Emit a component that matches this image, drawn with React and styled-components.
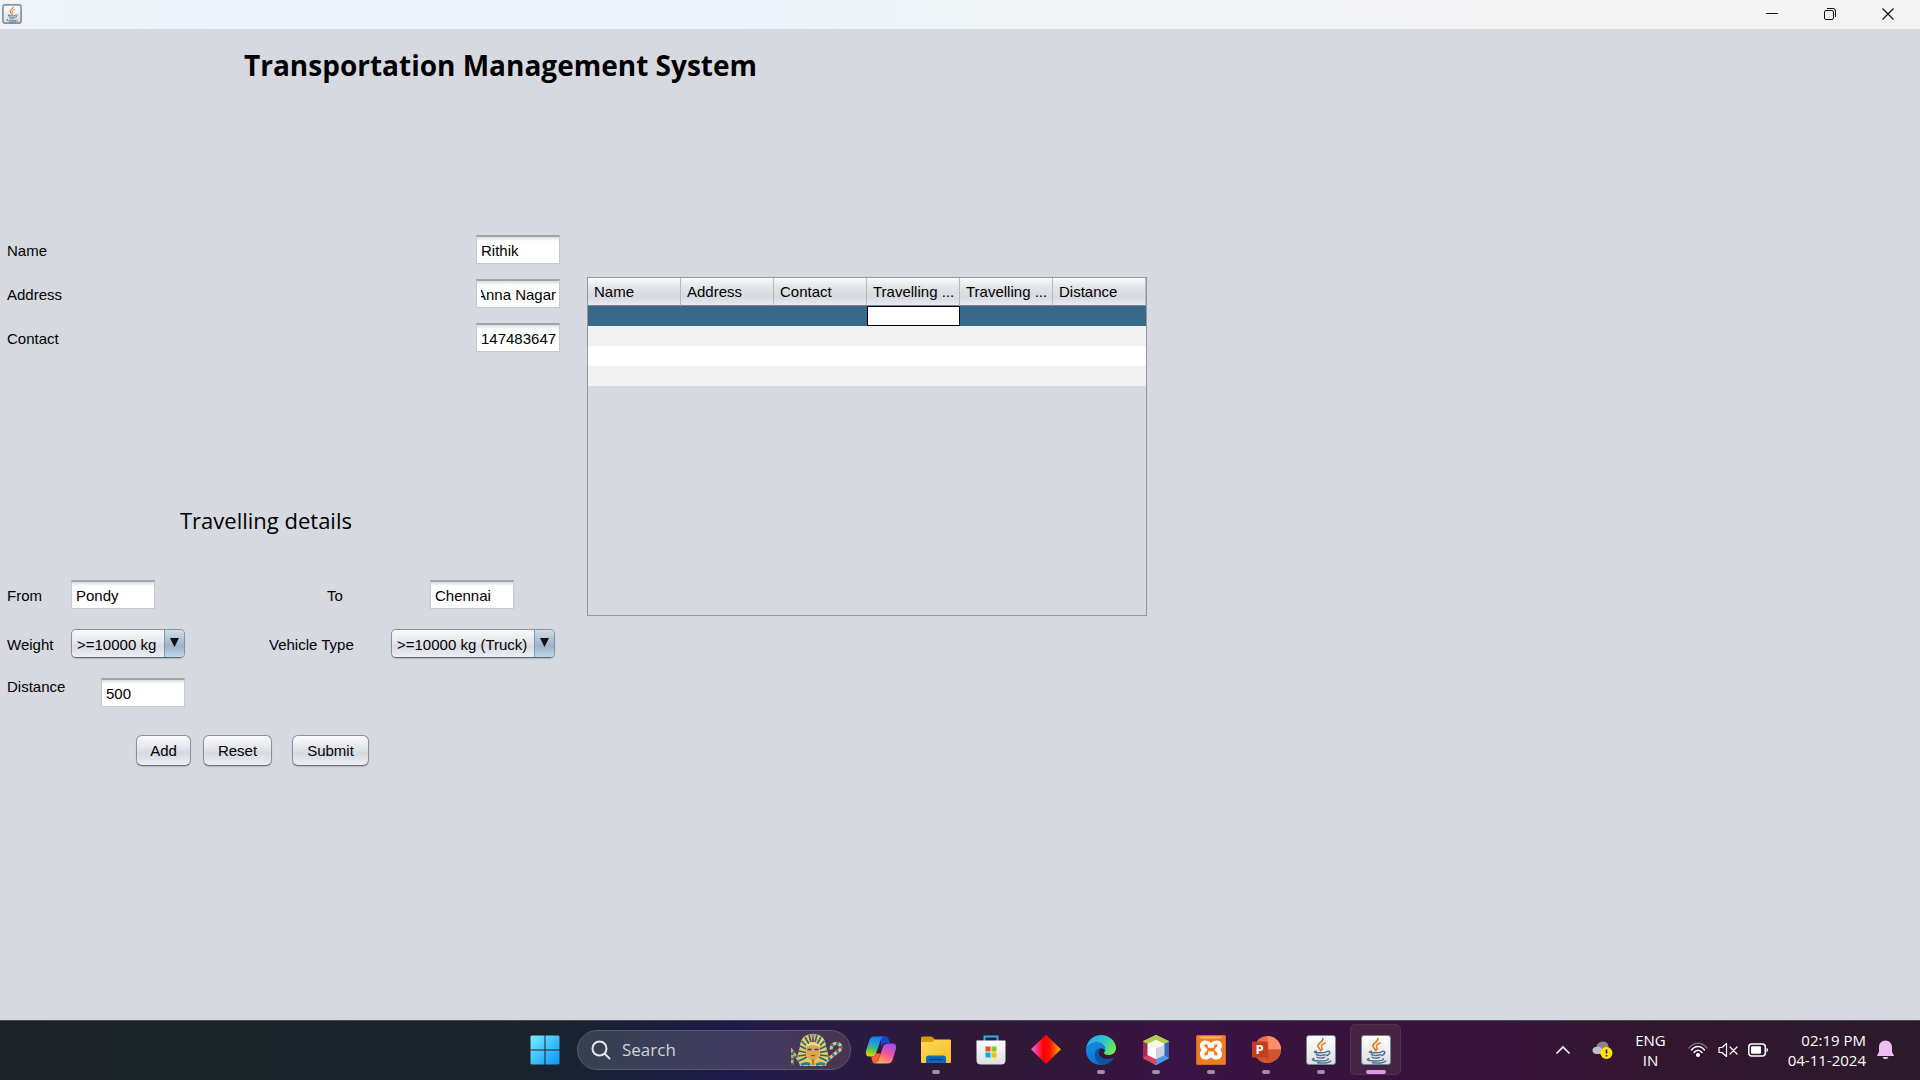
import React, { useEffect, useRef } from "react";
import styled, { createGlobalStyle } from "styled-components";

const GlobalStyle = createGlobalStyle`
  *, *::before, *::after { box-sizing: border-box; }
  body { margin: 0; background: #d6d9e0; color: #000; font: 15px/18px "Liberation Sans", Arial, sans-serif; }
  button, input, select { font: inherit; color: inherit; margin: 0; }
`;

const uiFont = `"Open Sans", "Noto Sans", sans-serif`;

const Shell = styled.div`
  display: flex;
  flex-direction: column;
  min-height: 100vh;
`;

/* Window title bar */

const TitleBar = styled.header`
  display: flex;
  align-items: flex-start;
  justify-content: space-between;
  height: 29px;
  padding: 0 3px 0 2px;
  background: linear-gradient(90deg, #eef4f8 0, #edf2fb 12%, #edf2fb 38%, #eff4f7 50%, #f3f3f5 75%, #f3f3f3 100%);
`;

const WindowIcon = styled.svg`
  width: 20px;
  height: 20px;
  margin-top: 4px;
`;

const WindowButtons = styled.div`
  display: flex;
`;

const WindowButton = styled.button`
  display: grid;
  place-items: center;
  width: 58px;
  height: 28px;
  padding: 0;
  border: 0;
  background: none;
`;

/* Form */

const Content = styled.main`
  flex: 1;
  padding: 16px 7px 24px;
`;

const Title = styled.h1`
  margin: 0 0 150px 237px;
  font: 700 28px/40px ${uiFont};
`;

const Body = styled.div`
  display: flex;
  align-items: flex-start;
  gap: 27px;
`;

const Form = styled.form`
  flex: 0 0 553px;
`;

const CustomerFields = styled.div`
  display: flex;
  flex-direction: column;
  gap: 15px;
`;

const CustomerRow = styled.div`
  display: flex;
  align-items: center;
  justify-content: space-between;
  & > label { padding-top: 2px; }
`;

const TextBox = styled.input`
  width: 84px;
  height: 29px;
  padding: 0 3px 0 4px;
  border: 1px solid #c6c8cc;
  border-top: 2px solid #a2a4a8;
  border-radius: 0;
  outline: 0;
  background: linear-gradient(#dcdcde 0, #fff 4px);
`;

const SectionTitle = styled.h2`
  margin: 153px 0 45px 173px;
  font: 400 22px/30px ${uiFont};
`;

const TripFields = styled.div`
  display: flex;
  flex-direction: column;
  gap: 20px;
`;

const TripRow = styled.div`
  display: flex;
  gap: ${(p) => p.$gap}px;
`;

const Field = styled.div`
  display: flex;
  align-items: ${(p) => (p.$top ? "flex-start" : "center")};
  & > label { padding-top: ${(p) => (p.$top ? 0 : 2)}px; }
`;

const FieldLabel = styled.label`
  width: ${(p) => p.$width}px;
`;

const Combo = styled.div`
  display: grid;
  grid-template-columns: 1fr 20px;
  width: ${(p) => p.$width}px;
  height: 29px;
  border: 1px solid #8b9099;
  border-bottom-color: #5d6977;
  border-radius: 5px;
  overflow: hidden;
  background: linear-gradient(#fafafb, #e4e6ea 45%, #d8dbe2 60%, #eceff5);
  box-shadow: 0 1px 1px #b4b8c0;
`;

const ComboSelect = styled.select`
  grid-area: 1 / 1 / 2 / 3;
  appearance: none;
  width: 100%;
  padding: 3px 20px 0 5px;
  border: 0;
  outline: 0;
  background: none;
`;

const ComboArrow = styled.span`
  grid-area: 1 / 2 / 2 / 3;
  display: grid;
  place-items: center;
  padding-bottom: 2px;
  border-left: 1px solid #7f99b0;
  background: linear-gradient(#d0dce8, #a7bdd0 45%, #9cb4c9 60%, #c3d7e9);
  pointer-events: none;
`;

const Buttons = styled.div`
  display: flex;
  gap: 12px;
  margin: 28px 0 0 129px;
`;

const PushButton = styled.button`
  width: ${(p) => p.$width}px;
  height: 31px;
  padding: 0;
  border: 1px solid #8b9099;
  border-bottom-color: #6b7079;
  border-radius: 6px;
  background: linear-gradient(#fafafb, #e4e6ea 40%, #d6d9e0 60%, #eceff5);
  box-shadow: 0 1px 1px #b4b8c0;
  &:last-child { margin-left: 8px; }
`;

/* Table */

const TablePane = styled.div`
  flex: 0 1 560px;
  height: 339px;
  margin-top: 42px;
  border: 1px solid #9297a1;
`;

const Table = styled.table`
  width: 100%;
  table-layout: fixed;
  border-collapse: separate;
  border-spacing: 0;
`;

const HeadCell = styled.th`
  height: 28px;
  padding: 0 6px;
  border-right: 1px solid #b4b8c0;
  border-bottom: 1px solid #80858f;
  background: linear-gradient(#fafafb, #e2e4e8 35%, #d7dae0 70%, #e6eaf2);
  font-weight: 400;
  text-align: left;
  white-space: nowrap;
`;

const BodyRow = styled.tr`
  background: ${(p) => (p.$selected ? "#39698a" : "#fff")};
  &:nth-child(even) { background: #f2f2f2; }
`;

const Cell = styled.td`
  height: 20px;
  padding: 0;
  ${(p) => p.$editing && "background: #fff; border: 1px solid #000;"}
`;

/* Taskbar */

const Taskbar = styled.footer`
  display: grid;
  grid-template-columns: 1fr auto 1fr;
  align-items: center;
  height: 60px;
  padding-bottom: 2px;
  border-top: 1px solid #4b4a52;
  background: linear-gradient(90deg, #1b2327 0, #19242b 27%, #1b1f3c 34%, #1e1b49 38%, #2a1b42 44%, #2f1a37 50%, #34163b 57%, #3a1445 61%, #38133d 68%, #38143a 78%, #32162f 86%, #2c1a2b 100%);
  color: #fff;
  font-family: ${uiFont};
`;

const Apps = styled.nav`
  grid-column: 2;
  display: flex;
  align-items: center;
`;

const AppButton = styled.button`
  display: grid;
  grid-template-rows: 1fr 4px;
  justify-items: center;
  align-items: center;
  row-gap: 0;
  width: 51px;
  height: 51px;
  margin: 0 2px;
  padding: 0;
  border: 1px solid ${(p) => (p.$active ? "#523449" : "transparent")};
  border-radius: 5px;
  background: ${(p) => (p.$active ? "#482444" : "none")};
`;

const AppIcon = styled.svg`
  display: block;
  width: 32px;
  height: 32px;
  margin-top: 4px;
`;

const RunMark = styled.span`
  width: ${(p) => (p.$active ? 20 : 8)}px;
  height: 4px;
  border-radius: 2px;
  background: ${(p) => (p.$active ? "#d99be6" : "#a08fa6")};
  visibility: ${(p) => (p.$running ? "visible" : "hidden")};
`;

const SearchBox = styled.label`
  display: flex;
  align-items: center;
  width: 274px;
  height: 40px;
  margin: 0 2px 0 5px;
  padding: 0 7px 0 13px;
  border: 1px solid #5d5873;
  border-radius: 20px;
  background: linear-gradient(90deg, #36414f, #3f3d5e 45%, #443a61 70%, #48344f);
`;

const SearchInput = styled.input`
  flex: 1;
  min-width: 0;
  padding: 0 0 0 11px;
  border: 0;
  outline: 0;
  background: none;
  font: 17px/24px ${uiFont};
  &::placeholder { color: #d2d3dc; opacity: 1; }
`;

const Tray = styled.div`
  grid-column: 3;
  display: flex;
  align-items: center;
  justify-content: flex-end;
  padding-right: 26px;
  font-size: 15px;
  line-height: 20px;
`;

const TrayButton = styled.button`
  display: flex;
  align-items: center;
  gap: ${(p) => p.$gap || 0}px;
  margin-right: ${(p) => p.$after || 0}px;
  padding: 0;
  border: 0;
  background: none;
`;

const TrayText = styled.div`
  margin-right: ${(p) => p.$after}px;
  text-align: ${(p) => p.$align};
`;

function JavaIcon({ small }) {
  const id = small ? "javaSmall" : "javaBig";
  return (
    <>
      <defs>
        <linearGradient id={id} x1="0" y1="0" x2="0" y2="1">
          <stop offset="0" stopColor="#fff" />
          <stop offset="1" stopColor="#dedede" />
        </linearGradient>
      </defs>
      <rect x="1.5" y="1.5" width="29" height="29" rx="2.5" fill={`url(#${id})`} stroke={small ? "#58718c" : "#6f8796"} strokeWidth={small ? 2 : 1} />
      <g fill="none" strokeLinecap="round">
        <path d="M17.8 4.500c1.200 3-5.500 4.600-4.800 7.600.3 1.700 2.400 2.700 2.600 4.600" stroke="#e8761f" strokeWidth="1.700" />
        <path d="M20.300 8.800c-3 1.300-4.500 2.300-3.600 4 .9 1.300.7 2.300-.3 3.500" stroke="#e8761f" strokeWidth="1.400" />
        <path d="M11.500 17.200c-3.800.8-2 1.700 3.500 1.600 3 0 5-.3 6-.7M11.300 20.400c1.800 1.500 6.800 1.300 9 .2M12 23.200c1.600 1.300 5.500 1.200 7.500.2M22 17.500c4-1.200 3.600 2.800-.5 4M9 24.500c-4 1.300 0 2.600 6.500 2.500 5 0 9-1 7.500-2.300M12.500 28.800c5 .6 11 .2 13.300-1.800" stroke="#4e7390" strokeWidth="1.400" />
      </g>
    </>
  );
}

const icons = {
  start: (
    <>
      <defs>
        <linearGradient id="win" x1="0" y1="0" x2="1" y2="1">
          <stop offset="0" stopColor="#7aeeff" />
          <stop offset=".5" stopColor="#3fc1fb" />
          <stop offset="1" stopColor="#0a93f8" />
        </linearGradient>
      </defs>
      <path fill="url(#win)" d="M2.500 1.500H15.500V15.500H1.500V2.500ZM16.500 1.500H29.500L30.500 2.500V15.500H16.500ZM1.500 16.500H15.500V30.500H2.500L1.500 29.500ZM16.500 16.500H30.500V29.500L29.500 30.500H16.500Z" />
    </>
  ),
  copilot: (
    <>
      <defs>
        <linearGradient id="cpA" x1=".4" y1="0" x2=".2" y2="1">
          <stop offset="0" stopColor="#1483e8" />
          <stop offset=".35" stopColor="#1fa3d8" />
          <stop offset=".65" stopColor="#5cc256" />
          <stop offset="1" stopColor="#fbd100" />
        </linearGradient>
        <linearGradient id="cpB" x1=".7" y1="0" x2=".3" y2="1">
          <stop offset="0" stopColor="#a24bf0" />
          <stop offset=".5" stopColor="#f0569c" />
          <stop offset="1" stopColor="#ffad55" />
        </linearGradient>
      </defs>
      <path d="M16 2.500h4c3 0 3.500 2 4.200 4.500l.8 2h-4c-3 0-4 2-5 4.500z" fill="#1745cf" />
      <path d="M9 2.500h10c-3 1-3.500 4-4.500 7l-3.500 10c-.8 2.300-2 3-4 3H4c-3 0-3.500-3-2.800-6L4.500 6C5.300 3.800 6.500 2.500 9 2.500z" fill="url(#cpA)" />
      <path d="M15.500 19.500l-2 6c-.8 3-2 4-4 4-2.500-.3-2.200-4-3.500-7h1c2 0 3.300-1 4-3z" fill="#f4622f" />
      <path d="M24.500 9.500h3.500c3 0 3.500 3 2.800 6L27.500 26c-.8 2.500-2.500 3.500-4.500 3.500H10c2.500-.5 3.500-3 4.300-6l3.700-10.500c.8-2.500 2.500-3.500 6.500-3.500z" fill="url(#cpB)" />
    </>
  ),
  files: (
    <>
      <defs>
        <linearGradient id="fold" x1="0" y1="0" x2="1" y2="1">
          <stop offset="0" stopColor="#ffd95c" />
          <stop offset="1" stopColor="#f9bd22" />
        </linearGradient>
      </defs>
      <path d="M1 4q0-1.500 1.500-1.500H11q1 0 2 1l2 2V12H1z" fill="#dd9a08" />
      <path d="M1 8h11l3-2.500h15q1 0 1 1V28q0 1-1 1H2q-1 0-1-1z" fill="url(#fold)" />
      <path d="M6 29v-5q0-2.500 2.500-2.500h15Q26 21.500 26 24v5z" fill="#0b6cbd" />
      <path d="M9.500 25.500h13" stroke="#073f78" strokeWidth="1.500" />
    </>
  ),
  store: (
    <>
      <defs>
        <linearGradient id="bag" x1="0" y1="0" x2="0" y2="1">
          <stop offset="0" stopColor="#fff" />
          <stop offset="1" stopColor="#dedede" />
        </linearGradient>
      </defs>
      <path d="M9.500 8V2.500h13V8" fill="none" stroke="#27b4ee" strokeWidth="2" />
      <path d="M1.500 6.500h29V26q0 4.500-4.500 4.500H6q-4.500 0-4.500-4.500z" fill="url(#bag)" />
      <path d="M10.500 12.500h5v5h-5z" fill="#f1511b" />
      <path d="M16.500 12.500h5v5h-5z" fill="#80cc28" />
      <path d="M10.500 18.500h5v5h-5z" fill="#00adef" />
      <path d="M16.500 18.500h5v5h-5z" fill="#fbbc09" />
    </>
  ),
  diamond: (
    <>
      <defs>
        <linearGradient id="dia" x1="0" y1="0" x2="1" y2="0">
          <stop offset=".03" stopColor="#ff5fe0" />
          <stop offset=".42" stopColor="#ff0000" />
          <stop offset=".62" stopColor="#ff1000" />
          <stop offset="1" stopColor="#ffb400" />
        </linearGradient>
      </defs>
      <path d="M16 .8 31 15.300 16 30 1 15.300z" fill="url(#dia)" />
    </>
  ),
  edge: (
    <>
      <defs>
        <linearGradient id="edA" x1="0" y1=".2" x2="1" y2=".6">
          <stop offset="0" stopColor="#2aa8ee" />
          <stop offset=".55" stopColor="#2cc5cf" />
          <stop offset="1" stopColor="#74ea4c" />
        </linearGradient>
        <linearGradient id="edB" x1="0" y1="0" x2=".6" y2="1">
          <stop offset="0" stopColor="#128fe2" />
          <stop offset="1" stopColor="#0870cf" />
        </linearGradient>
      </defs>
      <path d="M1 15C2 6.500 8.500 1 16 1c8.500 0 15 6.500 15 13 0 4.500-3.500 7-7.500 7-2.500 0-4.500-.8-4.500-2 0-.9 1.200-1.500 1.200-3.500C20.200 12 16.500 8.500 12 8.500c-5 0-9 2.500-11 6.500z" fill="url(#edA)" />
      <path d="M1 15c2-4 6.500-6.500 11-6.500 4.500 0 8.200 3.500 8.200 7 0 .5 0 1-.2 1.500-.5-2-2.200-3-4-2.700-2.500.5-4 3-3.300 6C13.800 24.500 18 27 23 26.500c2-.2 3.500-.8 5-1.500-2.700 3.700-7 6-12 6C7.500 31 1 24.500 1 16.500z" fill="url(#edB)" />
      <path d="M16 14.300c-4 0-6.500 3.200-6.200 7.200.4 4.500 3.700 8.300 7.200 9.500 5-.3 9-3 11.500-6.300.4-.6-.1-.9-.7-.6-1.500.7-3 1-4.800 1-5 0-9-3-9.200-6.300-.1-2 .8-3.500 2.200-4.500z" fill="#10509c" />
    </>
  ),
  netbeans: (
    <>
      <path d="M16 1 29 7.500v16L16 31 3 23.500v-16z" fill="#f4f5f5" />
      <path d="M16 1 29 7l-4 3-9-4-9 4-4-3z" fill="#b1cf4b" />
      <path d="M3 7.500 8 10v11.500l-5 3z" fill="#a42a56" />
      <path d="M3 24.500 8 21l8 4v6z" fill="#db4262" />
      <path d="M29 7.500 24 10v11.500l5 3z" fill="#2d66b4" />
      <path d="M29 24.500 24 21l-8 4v6z" fill="#489ae8" />
      <path d="m16 6 8.500 4.300L16 15 7.500 10.300z" fill="#f4f7e6" />
      <path d="M7.500 10.300 16 15v10l-8.500-4z" fill="#fff" />
      <path d="M24.500 10.300 16 15v10l8.500-4z" fill="#ccd3dc" />
    </>
  ),
  xampp: (
    <>
      <rect x="1" y="1" width="30" height="30" rx="2" fill="#f47b20" />
      <rect x="1.500" y="1.500" width="29" height="29" rx="2" fill="none" stroke="#c86c2c" />
      <path d="M4 2.500h24q-1 2-4 2H8q-3 0-4-2z" fill="#fff" opacity=".45" />
      <path d="M10.500 6.500C7 6.500 5 8.800 5 11.500c0 1.800.7 3.300 1.700 4.300C5.600 17 5 18.300 5 20c0 3.300 2.300 5.500 5.500 5.500 2.300 0 4.300-.8 5.500-2.300 1.200 1.500 3.200 2.300 5.500 2.300 3.200 0 5.500-2.200 5.500-5.500 0-1.700-.6-3-1.700-4.200 1-1 1.700-2.500 1.700-4.300 0-2.700-2-5-5.500-5-2.300 0-4.300.9-5.500 2.600-1.200-1.700-3.200-2.600-5.500-2.600z" fill="#fff" />
      <path d="M9.300 11.300c0-1.600 3.700-1.400 3.700 1v1.500h6v-1.500c0-2.400 3.700-2.600 3.700-1s-2.500 2.500-3.200 4.500c.7 2 3.200 2.500 3.200 4.500s-3.700 1.700-3.700-.7v-2h-6v2c0 2.400-3.700 2.700-3.700.7s2.500-2.500 3.200-4.500c-.7-2-3.200-2.900-3.200-4.500z" fill="#f47b20" />
    </>
  ),
  powerpoint: (
    <>
      <circle cx="17.500" cy="15.500" r="13.500" fill="#ec6c49" />
      <path d="M17.500 2A13.500 13.500 0 0 1 31 15.500H17.500z" fill="#ff8f6b" />
      <path d="M4 15.500h27a13.500 13.500 0 0 1-27 0z" fill="#d35230" />
      <path d="M17.500 7.500v18" stroke="#a13a22" strokeWidth="2" opacity=".4" />
      <rect x="2" y="7.500" width="15.500" height="16" rx="1.300" fill="#c43e1c" />
      <text x="5.500" y="20" fill="#fff" fontFamily="Open Sans, sans-serif" fontWeight="700" fontSize="13">P</text>
    </>
  ),
  java: <JavaIcon />,
};

const apps = [
  { id: "copilot", name: "Copilot" },
  { id: "files", name: "File Explorer", running: true },
  { id: "store", name: "Microsoft Store" },
  { id: "diamond", name: "Diamond" },
  { id: "edge", name: "Microsoft Edge", running: true },
  { id: "netbeans", name: "NetBeans", running: true },
  { id: "xampp", name: "XAMPP", running: true },
  { id: "powerpoint", name: "PowerPoint", running: true },
  { id: "java", name: "Java", running: true },
  { id: "java", name: "Java window", running: true, active: true },
];

const columns = ["Name", "Address", "Contact", "Travelling ...", "Travelling ...", "Distance"];
const rows = [0, 1, 2, 3];

function TaskApp({ id, name, running, active }) {
  return (
    <AppButton type="button" aria-label={name} $active={active}>
      <AppIcon viewBox="0 0 32 32">{icons[id]}</AppIcon>
      <RunMark $running={running} $active={active} />
    </AppButton>
  );
}

function ScrolledTextBox(props) {
  const ref = useRef(null);
  useEffect(() => {
    ref.current.scrollLeft = ref.current.scrollWidth;
  }, []);
  return <TextBox ref={ref} {...props} />;
}

function ComboBox({ id, value, width }) {
  return (
    <Combo $width={width}>
      <ComboSelect id={id} defaultValue={value}>
        <option>{value}</option>
      </ComboSelect>
      <ComboArrow>
        <svg width="9" height="9" viewBox="0 0 9 9"><path d="M0 0h9L4.500 9z" fill="#111" /></svg>
      </ComboArrow>
    </Combo>
  );
}

function Pharaoh() {
  return (
    <svg width="52" height="34" viewBox="0 0 52 34" aria-hidden="true">
      <path d="M1 32V18l10 13" fill="none" stroke="#d9a648" strokeWidth="3" />
      <path d="M1 32V18l10 13" fill="none" stroke="#22708c" strokeWidth="3" strokeDasharray="2 3" />
      <path d="M33 30l13-11c5-2 5-8 0-8.500-3.500-.4-6 2-6 6" fill="none" stroke="#e7c070" strokeWidth="3.200" />
      <path d="M33 30l13-11c5-2 5-8 0-8.500-3.500-.4-6 2-6 6" fill="none" stroke="#207c9e" strokeWidth="3.200" strokeDasharray="2.500 3" />
      <path d="M22 1C13 1 9.500 6 9 13L6.500 23 9 33h26l2.500-10L35 13C34.500 6 31 1 22 1z" fill="#efc65c" />
      <path d="M14 4l4 7M10.500 8l5 5M9 13l6 3M8 18l7 1.500M7 23l8-1M8 28l8-4M30 4l-4 7M33.500 8l-5 5M35 13l-6 3M36 18l-7 1.500M37 23l-8-1M36 28l-8-4M18 2l2 7M26 2l-2 7" stroke="#17688b" strokeWidth="1.700" />
      <path d="M15 13q7-5 14 0l-.5 8q-2 6-6.500 6t-6.500-6z" fill="#dba64f" />
      <path d="M15 13q7-4 14 0" fill="none" stroke="#f8dc85" strokeWidth="2" />
      <path d="M16.500 16.500h4M23.500 16.500h4" stroke="#174c5d" strokeWidth="1.500" />
      <path d="M20 22.500h4" stroke="#914d31" strokeWidth="1.300" />
      <path d="M20.700 26h2.600v6h-2.600z" fill="#b88229" />
      <path d="M10 32q6-3 9 0M25 32q5-3 9 0" stroke="#1a86a6" strokeWidth="3" fill="none" />
      <path d="M21 4h2v5h-2z" fill="#c23b25" />
      <circle cx="22" cy="2.500" r="2" fill="#8c949c" />
    </svg>
  );
}

export default function App() {
  return (
    <Shell>
      <GlobalStyle />
      <TitleBar>
        <WindowIcon viewBox="0 0 32 32" aria-hidden="true"><JavaIcon small /></WindowIcon>
        <WindowButtons>
          <WindowButton type="button" aria-label="Minimize">
            <svg width="12" height="12" viewBox="0 0 12 12"><path d="M0 5.500h12" stroke="#111" /></svg>
          </WindowButton>
          <WindowButton type="button" aria-label="Restore">
            <svg width="12" height="12" viewBox="0 0 12 12" fill="none" stroke="#111"><rect x=".5" y="2.500" width="9" height="9" rx="1.500" /><path d="M3 .5h6q2.500 0 2.500 2.500v6" /></svg>
          </WindowButton>
          <WindowButton type="button" aria-label="Close">
            <svg width="12" height="12" viewBox="0 0 12 12"><path d="m.5.5 11 11m0-11-11 11" stroke="#111" strokeWidth="1.200" /></svg>
          </WindowButton>
        </WindowButtons>
      </TitleBar>

      <Content>
        <Title>Transportation Management System</Title>
        <Body>
          <Form onSubmit={(e) => e.preventDefault()}>
            <CustomerFields>
              <CustomerRow>
                <label htmlFor="name">Name</label>
                <TextBox id="name" defaultValue="Rithik" />
              </CustomerRow>
              <CustomerRow>
                <label htmlFor="address">Address</label>
                <ScrolledTextBox id="address" defaultValue="Anna Nagar" />
              </CustomerRow>
              <CustomerRow>
                <label htmlFor="contact">Contact</label>
                <TextBox id="contact" defaultValue="147483647" />
              </CustomerRow>
            </CustomerFields>

            <SectionTitle>Travelling details</SectionTitle>

            <TripFields>
              <TripRow $gap={172}>
                <Field>
                  <FieldLabel htmlFor="from" $width={64}>From</FieldLabel>
                  <TextBox id="from" defaultValue="Pondy" />
                </Field>
                <Field>
                  <FieldLabel htmlFor="to" $width={103}>To</FieldLabel>
                  <TextBox id="to" defaultValue="Chennai" />
                </Field>
              </TripRow>
              <TripRow $gap={84}>
                <Field>
                  <FieldLabel htmlFor="weight" $width={64}>Weight</FieldLabel>
                  <ComboBox id="weight" value=">=10000 kg" width={114} />
                </Field>
                <Field>
                  <FieldLabel htmlFor="vehicle" $width={122}>Vehicle Type</FieldLabel>
                  <ComboBox id="vehicle" value=">=10000 kg (Truck)" width={164} />
                </Field>
              </TripRow>
              <TripRow $gap={0}>
                <Field $top>
                  <FieldLabel htmlFor="distance" $width={94}>Distance</FieldLabel>
                  <TextBox id="distance" defaultValue="500" />
                </Field>
              </TripRow>
            </TripFields>

            <Buttons>
              <PushButton type="button" $width={55}>Add</PushButton>
              <PushButton type="reset" $width={69}>Reset</PushButton>
              <PushButton type="submit" $width={77}>Submit</PushButton>
            </Buttons>
          </Form>

          <TablePane>
            <Table>
              <thead>
                <tr>{columns.map((c, i) => <HeadCell key={i} scope="col">{c}</HeadCell>)}</tr>
              </thead>
              <tbody>
                {rows.map((r) => (
                  <BodyRow key={r} $selected={r === 0}>
                    {columns.map((c, i) => <Cell key={i} $editing={r === 0 && i === 3} />)}
                  </BodyRow>
                ))}
              </tbody>
            </Table>
          </TablePane>
        </Body>
      </Content>

      <Taskbar>
        <Apps aria-label="Taskbar">
          <TaskApp id="start" name="Start" />
          <SearchBox>
            <svg width="20" height="20" viewBox="0 0 20 20" fill="none" stroke="#e6e7ee" strokeWidth="2" strokeLinecap="round"><circle cx="8.500" cy="8.500" r="7" /><path d="m13.500 13.500 5 5" /></svg>
            <SearchInput type="search" placeholder="Search" aria-label="Search" />
            <Pharaoh />
          </SearchBox>
          {apps.map((a) => <TaskApp key={a.name} {...a} />)}
        </Apps>

        <Tray>
          <TrayButton type="button" aria-label="Show hidden icons" $after={22}>
            <svg width="14" height="10" viewBox="0 0 14 10"><path d="m1 8 6-6 6 6" fill="none" stroke="#fff" strokeWidth="1.700" strokeLinecap="round" /></svg>
          </TrayButton>
          <TrayButton type="button" aria-label="OneDrive" $after={22}>
            <svg width="21" height="20" viewBox="0 0 21 20">
              <path d="M5 5c2-4 8-5 11-1l1 5-8 6-5-4z" fill="#8d828c" />
              <path d="M4 14c-4-.5-5-5-1-7 3-1.500 6 0 7 2l4 3-1 2z" fill="#c4bec4" />
              <circle cx="14.500" cy="13" r="6" fill="#ffe500" />
              <path d="M14.500 9.500v4M14.500 15v1.500" stroke="#222" strokeWidth="1.600" />
            </svg>
          </TrayButton>
          <TrayText $after={22} $align="center">ENG<br />IN</TrayText>
          <TrayButton type="button" aria-label="Network, volume and battery" $gap={10} $after={20}>
            <svg width="20" height="16" viewBox="0 0 20 16" fill="none" stroke="#fff" strokeWidth="1.500" strokeLinecap="round">
              <path d="M1 6C6-.5 14-.5 19 6" opacity=".35" />
              <path d="M3.500 8c3.500-4.700 9.500-4.700 13 0M6 10.500c2.500-3 5.500-3 8 0" />
              <circle cx="10" cy="13" r="1.300" fill="#fff" />
            </svg>
            <svg width="20" height="16" viewBox="0 0 20 16" fill="none" stroke="#fff" strokeWidth="1.200" strokeLinejoin="round" strokeLinecap="round">
              <path d="M1 5.500h3L8.500 1.500v13L4 10.500H1zM12 5l7 7m0-7-7 7" />
            </svg>
            <svg width="20" height="14" viewBox="0 0 20 14">
              <rect x=".8" y="1" width="16.500" height="12" rx="3" fill="none" stroke="#fff" strokeWidth="1.500" />
              <rect x="3" y="3.200" width="10" height="7.600" rx="1" fill="#fff" />
              <path d="M18.500 5q1.500 0 1.500 2t-1.500 2z" fill="#fff" />
            </svg>
          </TrayButton>
          <TrayText $after={11} $align="right">02:19 PM<br />04-11-2024</TrayText>
          <TrayButton type="button" aria-label="Notifications">
            <svg width="17" height="20" viewBox="0 0 17 20" fill="#edbff2"><path d="M8.500.5C4.500.5 2 3.500 2 7v5L.3 15q-.5 1 .7 1h15q1.200 0 .7-1L15 12V7C15 3.500 12.500.5 8.500.5zM5.500 17h6q-.8 2.300-3 2.300t-3-2.300z" /></svg>
          </TrayButton>
        </Tray>
      </Taskbar>
    </Shell>
  );
}
